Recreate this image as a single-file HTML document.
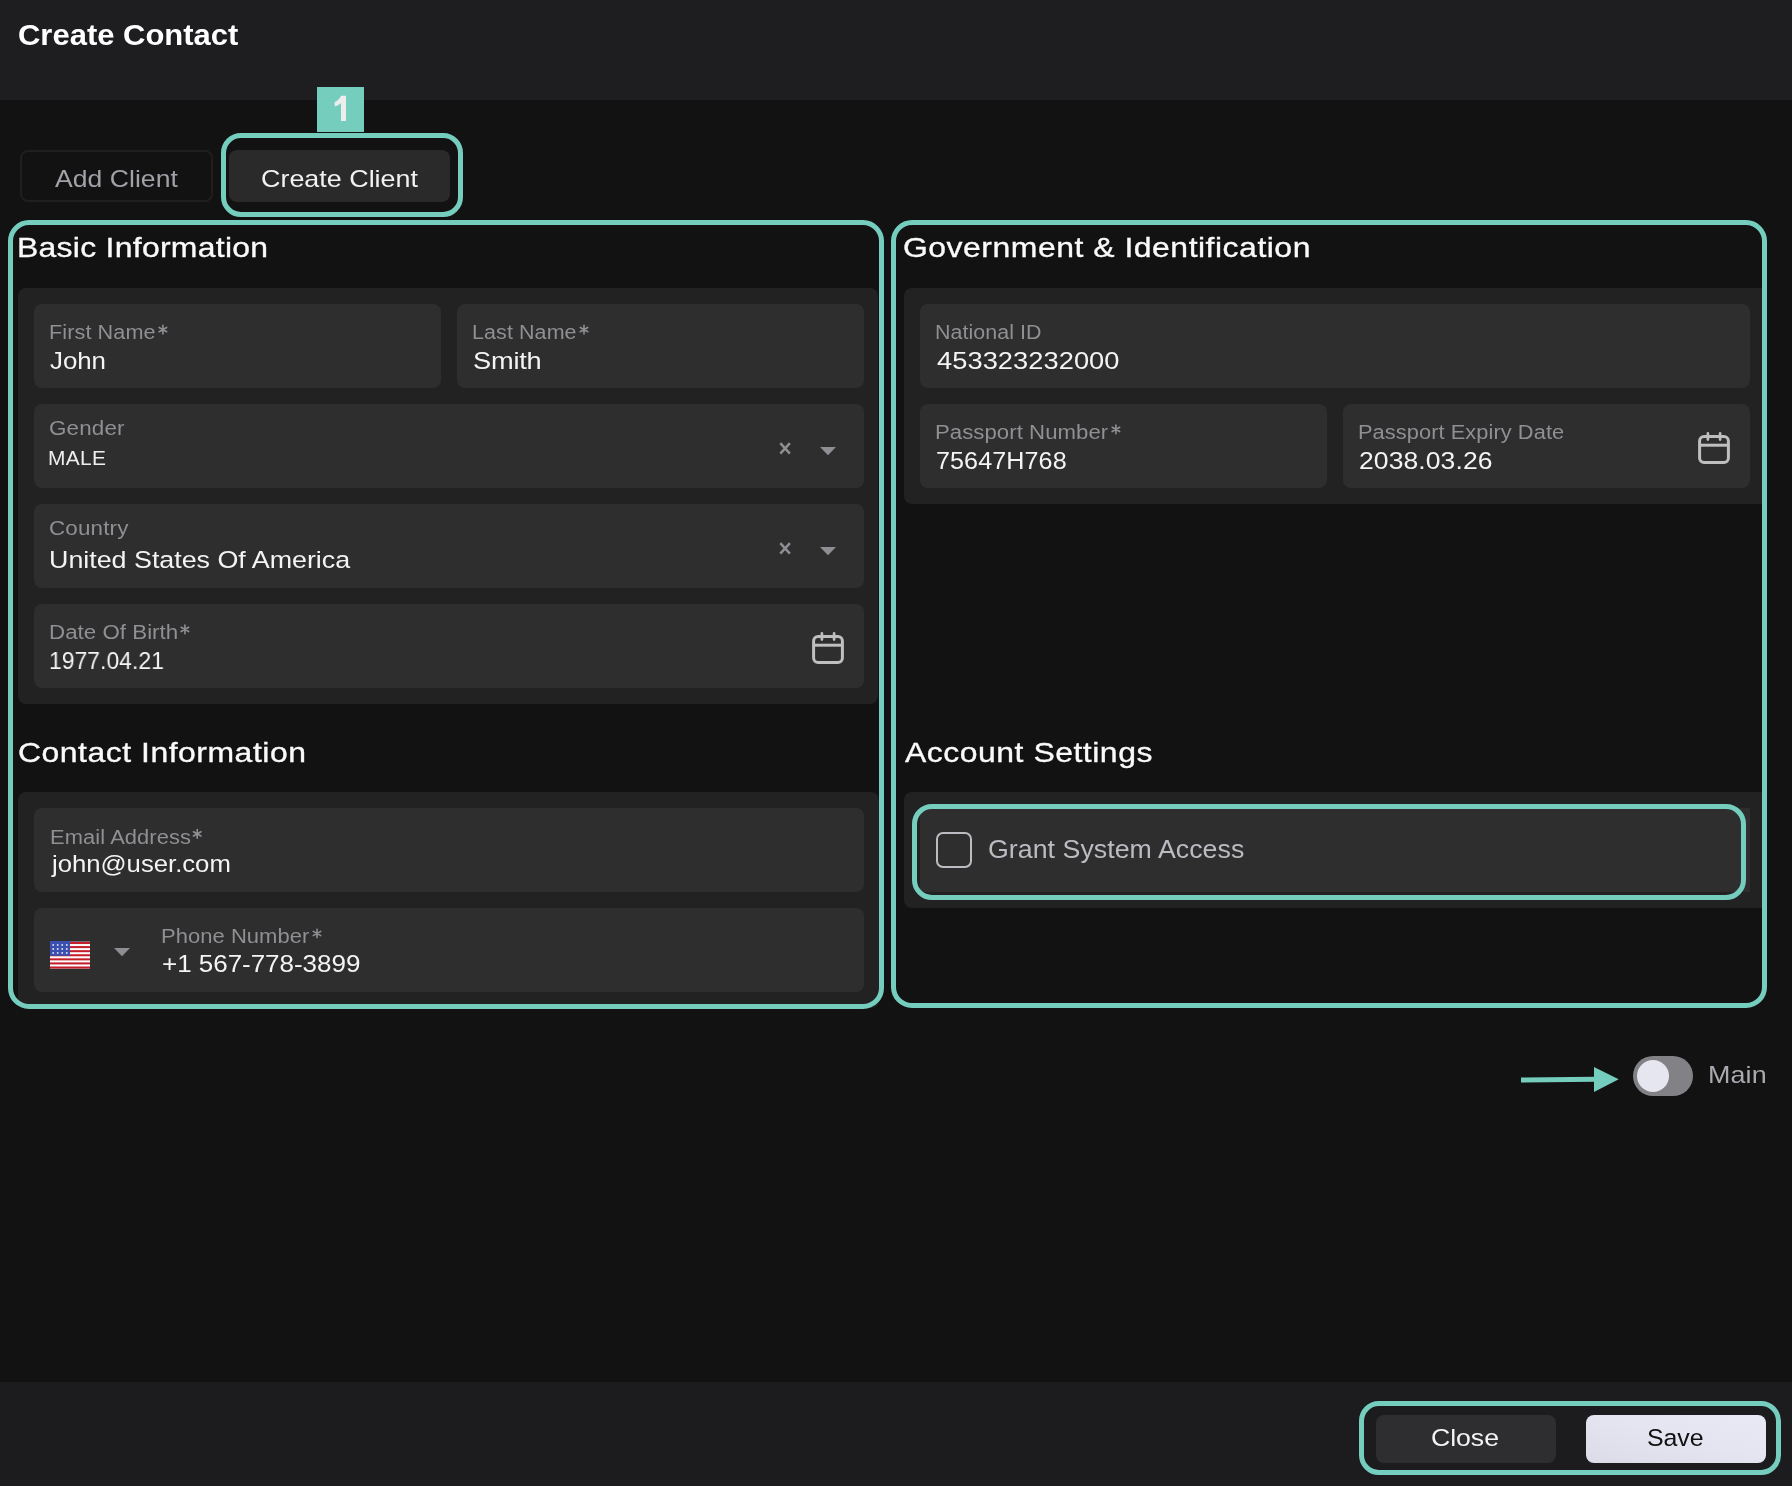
<!DOCTYPE html>
<html><head><meta charset="utf-8">
<style>
*{margin:0;padding:0;box-sizing:border-box}
html,body{width:1792px;height:1486px;overflow:hidden;background:#121212;font-family:"Liberation Sans",sans-serif;position:relative}
.a{position:absolute}
.t{position:absolute;line-height:0;white-space:nowrap;will-change:transform}
.hdr{left:0;top:0;width:1792px;height:100px;background:#1e1e20}
.ftr{left:0;top:1382px;width:1792px;height:104px;background:#1c1c1e}
.frame{position:absolute;border:5px solid #74cdbd;border-radius:21px}
.cont{position:absolute;background:#222222}
.fld{position:absolute;background:#2e2e2e;border-radius:8px}
.h2{-webkit-text-stroke:0.35px #fafafa}
svg{position:absolute;overflow:visible}
</style></head><body>
<div class="a hdr"></div>

<!-- tabs -->
<div class="a" style="left:317px;top:87px;width:47px;height:45px;background:#74cdbd"></div>
<svg style="left:0;top:0" width="1" height="1"><path d="M341 95.8 H346 V121 H341 V103.2 C339 104.8 336.8 105.8 334.7 106.5 V102 C337.5 100.8 339.8 98.8 341 95.8 Z" fill="#ededed"/></svg>
<div class="frame" style="left:221px;top:133px;width:242px;height:83.5px;border-radius:20px"></div>
<div class="a" style="left:20px;top:150px;width:193px;height:51.5px;border:2px solid #1f1f20;border-radius:8px"></div>
<div class="a" style="left:229px;top:150px;width:221px;height:51.5px;background:#2a2a2b;border-radius:8px"></div>

<!-- left frame -->
<div class="cont" style="left:18px;top:288px;width:860px;height:416px;border-radius:8px"></div>
<div class="cont" style="left:18px;top:792px;width:861px;height:216px;border-radius:8px"></div>

<div class="fld" style="left:34px;top:304px;width:407px;height:84px"></div>
<div class="fld" style="left:457px;top:304px;width:407px;height:84px"></div>
<div class="fld" style="left:34px;top:404px;width:830px;height:84px"></div>
<div class="fld" style="left:34px;top:504px;width:830px;height:84px"></div>
<div class="fld" style="left:34px;top:604px;width:830px;height:84px"></div>
<div class="fld" style="left:34px;top:808px;width:830px;height:84px"></div>
<div class="fld" style="left:34px;top:908px;width:830px;height:84px"></div>

<!-- select icons -->
<svg style="left:0;top:0" width="1" height="1">
  <g stroke="#8e8e93" stroke-width="2.5" stroke-linecap="butt">
    <path d="M780.3 443.1 L789.9 453.6 M789.9 443.1 L780.3 453.6"/>
    <path d="M780.3 543.1 L789.9 553.6 M789.9 543.1 L780.3 553.6"/>
  </g>
  <g fill="#8e8e93">
    <polygon points="820,447 836,447 828,455.3"/>
    <polygon points="820,547 836,547 828,555.3"/>
    <polygon points="114,948 130,948 122,956.3"/>
  </g>
</svg>

<!-- calendars -->
<svg style="left:812px;top:632px" width="32" height="33"><g fill="none" stroke="#bfbfc0" stroke-width="3">
 <rect x="1.6" y="4.4" width="28.8" height="26.2" rx="4.5"/><path d="M1.6 13.2 H30.4"/>
 <path d="M9.9 1.4 V7.6 M22.1 1.4 V7.6" stroke-width="2.7" stroke-linecap="round"/></g></svg>

<!-- flag -->
<svg style="left:50px;top:941px" width="40" height="28" viewBox="0 0 40 28">
 <rect width="40" height="27.6" fill="#fff"/>
 <g fill="#c41e2b"><rect y="1.00" width="40" height="2.04"/><rect y="5.08" width="40" height="2.04"/><rect y="9.16" width="40" height="2.04"/><rect y="13.24" width="40" height="2.04"/><rect y="17.32" width="40" height="2.04"/><rect y="21.40" width="40" height="2.04"/><rect y="25.48" width="40" height="2.04"/></g>
 <rect width="40" height="1" fill="#7d6a78"/>
 <rect width="20" height="14.8" fill="#3a4fb0"/>
 <g fill="#e4e6f2"><circle cx="3.2" cy="3.9" r="0.95"/><circle cx="7.7" cy="3.9" r="0.95"/><circle cx="12.2" cy="3.9" r="0.95"/><circle cx="16.8" cy="3.9" r="0.95"/><circle cx="3.2" cy="8" r="0.95"/><circle cx="7.7" cy="8" r="0.95"/><circle cx="12.2" cy="8" r="0.95"/><circle cx="16.8" cy="8" r="0.95"/><circle cx="3.2" cy="11.9" r="0.95"/><circle cx="7.7" cy="11.9" r="0.95"/><circle cx="12.2" cy="11.9" r="0.95"/><circle cx="16.8" cy="11.9" r="0.95"/></g>
</svg>

<!-- right frame -->
<div class="cont" style="left:904px;top:288px;width:860px;height:216px;border-radius:8px 0 0 8px"></div>
<div class="cont" style="left:904px;top:792px;width:860px;height:116px;border-radius:8px 0 0 8px"></div>

<div class="fld" style="left:920px;top:304px;width:830px;height:84px"></div>
<div class="fld" style="left:920px;top:404px;width:407px;height:84px"></div>
<div class="fld" style="left:1343px;top:404px;width:407px;height:84px"></div>
<div class="fld" style="left:920px;top:808px;width:830px;height:84px;border-radius:0"></div>
<div class="frame" style="left:912px;top:804px;width:834px;height:96px;border-radius:20px"></div>

<svg style="left:1698px;top:432px" width="32" height="33"><g fill="none" stroke="#bfbfc0" stroke-width="3">
 <rect x="1.6" y="4.4" width="28.8" height="26.2" rx="4.5"/><path d="M1.6 13.2 H30.4"/>
 <path d="M9.9 1.4 V7.6 M22.1 1.4 V7.6" stroke-width="2.7" stroke-linecap="round"/></g></svg>
<div class="a" style="left:936px;top:832px;width:36px;height:36px;border:2.5px solid #bdbcc2;border-radius:7px"></div>

<div class="frame" style="left:8px;top:220px;width:876px;height:789px"></div>
<div class="frame" style="left:891px;top:220px;width:876px;height:788px"></div>

<!-- toggle -->
<svg style="left:0;top:0" width="1" height="1"><polygon points="1521,1077.5 1595,1076.8 1595,1081.8 1521,1082.5" fill="#74cdbd"/><polygon points="1594,1066.9 1618.7,1079.2 1594,1091.9" fill="#74cdbd"/></svg>
<div class="a" style="left:1633px;top:1056px;width:60px;height:40px;border-radius:20px;background:#828286"></div>
<div class="a" style="left:1637px;top:1060px;width:32px;height:32px;border-radius:16px;background:#e6e6f0"></div>

<!-- footer -->
<div class="a ftr"></div>
<div class="frame" style="left:1359px;top:1401px;width:422px;height:74px;border-radius:20px"></div>
<div class="a" style="left:1376px;top:1415px;width:180px;height:48px;background:#2e2e30;border-radius:8px"></div>
<div class="a" style="left:1586px;top:1415px;width:180px;height:48px;background:linear-gradient(15deg,#dbdce8 0%,#e4e5f1 55%,#e8e9f5 100%);border-radius:8px"></div>

<div id="title" class="t" style="left:17.80px;top:calc(45.5px - .3465em);font-size:29px;color:#ffffff;letter-spacing:0.000px;transform:scaleX(1.0683);transform-origin:0 0;font-weight:bold">Create Contact</div>
<div id="addc" class="t" style="left:55.00px;top:calc(187px - .3465em);font-size:24px;color:#a1a1a8;letter-spacing:0.040px;transform:scaleX(1.1054);transform-origin:0 0">Add Client</div>
<div id="crec" class="t" style="left:260.60px;top:calc(187px - .3465em);font-size:24px;color:#f2f2f2;letter-spacing:0.015px;transform:scaleX(1.1194);transform-origin:0 0">Create Client</div>
<div id="h_basic" class="t h2" style="left:17.00px;top:calc(256.7px - .3465em);font-size:28.5px;color:#fafafa;letter-spacing:0.249px;transform:scaleX(1.1200);transform-origin:0 0">Basic Information</div>
<div id="h_gov" class="t h2" style="left:903.00px;top:calc(256.7px - .3465em);font-size:28.5px;color:#fafafa;letter-spacing:0.464px;transform:scaleX(1.1200);transform-origin:0 0">Government &amp; Identification</div>
<div id="h_contact" class="t h2" style="left:17.60px;top:calc(761.5px - .3465em);font-size:28.5px;color:#fafafa;letter-spacing:0.464px;transform:scaleX(1.1200);transform-origin:0 0">Contact Information</div>
<div id="h_acc" class="t h2" style="left:904.60px;top:calc(761.5px - .3465em);font-size:28.5px;color:#fafafa;letter-spacing:0.466px;transform:scaleX(1.1200);transform-origin:0 0">Account Settings</div>
<div id="l_first" class="t" style="left:48.80px;top:calc(339.2px - .3465em);font-size:20px;color:#8f8f94;letter-spacing:0.082px;transform:scaleX(1.0823);transform-origin:0 0">First Name</div>
<div id="v_first" class="t" style="left:50.20px;top:calc(369.2px - .3465em);font-size:24.5px;color:#f4f4f4;letter-spacing:-0.064px;transform:scaleX(1.0569);transform-origin:0 0">John</div>
<div id="l_last" class="t" style="left:472.20px;top:calc(339.2px - .3465em);font-size:20px;color:#8f8f94;letter-spacing:0.093px;transform:scaleX(1.0726);transform-origin:0 0">Last Name</div>
<div id="v_last" class="t" style="left:473.00px;top:calc(369.2px - .3465em);font-size:24.5px;color:#f4f4f4;letter-spacing:-0.180px;transform:scaleX(1.1100);transform-origin:0 0">Smith</div>
<div id="l_gender" class="t" style="left:49.40px;top:calc(435.1px - .3465em);font-size:20px;color:#8f8f94;letter-spacing:0.143px;transform:scaleX(1.1200);transform-origin:0 0">Gender</div>
<div id="v_gender" class="t" style="left:48.40px;top:calc(465px - .3465em);font-size:19.6px;color:#eeeeee;letter-spacing:0.312px;transform:scaleX(1.0673);transform-origin:0 0">MALE</div>
<div id="l_country" class="t" style="left:49.00px;top:calc(535.2px - .3465em);font-size:20px;color:#8f8f94;letter-spacing:0.152px;transform:scaleX(1.1200);transform-origin:0 0">Country</div>
<div id="v_country" class="t" style="left:49.00px;top:calc(568px - .3465em);font-size:24.5px;color:#f4f4f4;letter-spacing:-0.016px;transform:scaleX(1.0963);transform-origin:0 0">United States Of America</div>
<div id="l_dob" class="t" style="left:49.00px;top:calc(639px - .3465em);font-size:20px;color:#8f8f94;letter-spacing:0.014px;transform:scaleX(1.1159);transform-origin:0 0">Date Of Birth</div>
<div id="v_dob" class="t" style="left:49.00px;top:calc(669px - .3465em);font-size:24.5px;color:#f4f4f4;letter-spacing:0.071px;transform:scaleX(0.9317);transform-origin:0 0">1977.04.21</div>
<div id="l_email" class="t" style="left:49.60px;top:calc(843.5px - .3465em);font-size:20px;color:#8f8f94;letter-spacing:0.076px;transform:scaleX(1.0952);transform-origin:0 0">Email Address</div>
<div id="v_email" class="t" style="left:51.60px;top:calc(872.5px - .3465em);font-size:24.5px;color:#f4f4f4;letter-spacing:-0.016px;transform:scaleX(1.0494);transform-origin:0 0">john@user.com</div>
<div id="l_phone" class="t" style="left:161.00px;top:calc(943.1px - .3465em);font-size:20px;color:#8f8f94;letter-spacing:0.034px;transform:scaleX(1.0992);transform-origin:0 0">Phone Number</div>
<div id="v_phone" class="t" style="left:162.00px;top:calc(972.8px - .3465em);font-size:24.5px;color:#f4f4f4;letter-spacing:-0.027px;transform:scaleX(1.0611);transform-origin:0 0">+1 567-778-3899</div>
<div id="l_nid" class="t" style="left:935.20px;top:calc(339px - .3465em);font-size:20px;color:#8f8f94;letter-spacing:0.056px;transform:scaleX(1.0701);transform-origin:0 0">National ID</div>
<div id="v_nid" class="t" style="left:936.60px;top:calc(369.1px - .3465em);font-size:24.5px;color:#f4f4f4;letter-spacing:0.050px;transform:scaleX(1.1123);transform-origin:0 0">453323232000</div>
<div id="l_pass" class="t" style="left:935.20px;top:calc(439px - .3465em);font-size:20px;color:#8f8f94;letter-spacing:0.039px;transform:scaleX(1.1091);transform-origin:0 0">Passport Number</div>
<div id="v_pass" class="t" style="left:935.60px;top:calc(469.1px - .3465em);font-size:24.5px;color:#f4f4f4;letter-spacing:0.074px;transform:scaleX(1.0264);transform-origin:0 0">75647H768</div>
<div id="l_exp" class="t" style="left:1358.00px;top:calc(439px - .3465em);font-size:20px;color:#8f8f94;letter-spacing:0.068px;transform:scaleX(1.0898);transform-origin:0 0">Passport Expiry Date</div>
<div id="v_exp" class="t" style="left:1359.00px;top:calc(469px - .3465em);font-size:24.5px;color:#f4f4f4;letter-spacing:0.082px;transform:scaleX(1.0818);transform-origin:0 0">2038.03.26</div>
<div id="grant" class="t" style="left:987.60px;top:calc(857.8px - .3465em);font-size:26px;color:#bcbbc2;letter-spacing:0.044px;transform:scaleX(1.0279);transform-origin:0 0">Grant System Access</div>
<div id="main" class="t" style="left:1707.80px;top:calc(1083px - .3465em);font-size:24px;color:#a9a9b0;letter-spacing:0.125px;transform:scaleX(1.1200);transform-origin:0 0">Main</div>
<div id="close" class="t" style="left:1431.40px;top:calc(1446px - .3465em);font-size:24.5px;color:#f4f4f4;letter-spacing:-0.046px;transform:scaleX(1.0885);transform-origin:0 0">Close</div>
<div id="save" class="t" style="left:1647.00px;top:calc(1446px - .3465em);font-size:24.5px;color:#111111;letter-spacing:-0.066px;transform:scaleX(1.0167);transform-origin:0 0">Save</div>
<svg style="left:0;top:0" width="1" height="1"><g stroke="#8f8f94" stroke-width="1.6" stroke-linecap="round"><path d="M162.90 325.30 V333.90 M159.15 327.45 L166.65 331.75 M159.15 331.75 L166.65 327.45"/></g></svg>
<svg style="left:0;top:0" width="1" height="1"><g stroke="#8f8f94" stroke-width="1.6" stroke-linecap="round"><path d="M584.00 325.30 V333.90 M580.25 327.45 L587.75 331.75 M580.25 331.75 L587.75 327.45"/></g></svg>
<svg style="left:0;top:0" width="1" height="1"><g stroke="#8f8f94" stroke-width="1.6" stroke-linecap="round"><path d="M184.90 625.10 V633.70 M181.15 627.25 L188.65 631.55 M181.15 631.55 L188.65 627.25"/></g></svg>
<svg style="left:0;top:0" width="1" height="1"><g stroke="#8f8f94" stroke-width="1.6" stroke-linecap="round"><path d="M197.20 829.60 V838.20 M193.45 831.75 L200.95 836.05 M193.45 836.05 L200.95 831.75"/></g></svg>
<svg style="left:0;top:0" width="1" height="1"><g stroke="#8f8f94" stroke-width="1.6" stroke-linecap="round"><path d="M317.00 929.20 V937.80 M313.25 931.35 L320.75 935.65 M313.25 935.65 L320.75 931.35"/></g></svg>
<svg style="left:0;top:0" width="1" height="1"><g stroke="#8f8f94" stroke-width="1.6" stroke-linecap="round"><path d="M1115.90 425.10 V433.70 M1112.15 427.25 L1119.65 431.55 M1112.15 431.55 L1119.65 427.25"/></g></svg>
</body></html>
